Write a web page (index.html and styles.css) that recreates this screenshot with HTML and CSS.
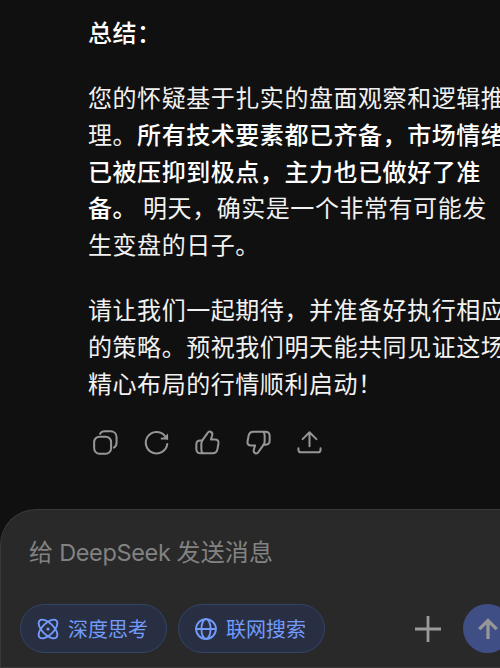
FILE: index.html
```
<!DOCTYPE html>
<html lang="zh-CN">
<head>
  <meta charset="UTF-8">
  <title>DeepSeek</title>
  <link rel="stylesheet" href="styles.css">
</head>
<body>
  <div class="chat">
    <div class="answer">
      <p><b>总结：</b></p>
      <p>您的怀疑基于扎实的盘面观察和逻辑推<br>理。<b>所有技术要素都已齐备，市场情绪<br>已被压抑到极点，主力也已做好了准<br>备。</b> 明天，确实是一个非常有可能发<br>生变盘的日子。</p>
      <p>请让我们一起期待，并准备好执行相应<br>的策略。预祝我们明天能共同见证这场<br>精心布局的行情顺利启动！</p>
    </div>

    <!-- Message actions -->
    <div class="actions">
      <svg viewBox="0 0 26 26"><rect x="1.2" y="7" width="17.6" height="17.600" rx="5.500"/><path d="M7.3 3.8C8.2 2.3 9.6 1.4 11.500 1.4h6.8c3.5 0 6.200 2.400 6.200 6v5.6c0 2.6-1 4.500-2.800 5.300"/></svg>
      <svg viewBox="0 0 26 26"><path d="M24.200 14.500A11.200 11.200 0 1 1 21.500 5.800L24.200 9"/><path class="fill" d="M25 3.500v6.300h-7.500v-1.800l4-.5z"/></svg>
      <svg viewBox="0 0 26 26"><path d="M7.600 10.800 13 3.200c1-1.600 2-2 3.300-1.400 1.500.7 2 2 1.600 3.600l-1.300 4.400h4.100c2.700 0 4.100 1.600 3.700 4.200l-1 5.600c-.5 2.900-2.200 4.600-5 4.600H6c-3 0-4.600-1.500-4.600-4.300v-4.800c0-2.700 1.400-4.300 4-4.300z"/><path d="M7.600 10.800C6.800 12 6.600 13 6.600 14.500v5.500c0 1.700.4 3 1.200 4"/></svg>
      <svg viewBox="0 0 26 26"><path d="M18.400 15.200 13 22.800c-1 1.600-2 2-3.300 1.400-1.500-.7-2-2-1.600-3.600l1.300-4.400H5.300c-2.700 0-4.100-1.600-3.700-4.200l1-5.600C3.100 3.500 4.800 1.800 7.600 1.800H20c3 0 4.600 1.500 4.600 4.300v4.800c0 2.700-1.400 4.300-4 4.300z"/><path d="M18.400 15.200c.8-1.200 1-2.200 1-3.700V6c0-1.700-.4-3-1.200-4"/></svg>
      <svg viewBox="0 0 26 26"><path d="M13 17V2.500M5.800 9.500 13 2.300l7.200 7.200M1.500 19v1.500c0 1.800.9 2.700 2.700 2.700h17.600c1.800 0 2.700-.9 2.700-2.700V19"/></svg>
    </div>
  </div>

  <!-- Input box -->
  <div class="composer">
    <div class="placeholder">给 <span class="latin">DeepSeek</span> 发送消息</div>
    <div class="toolbar">
      <button class="pill" type="button">
        <svg viewBox="0 0 24 24"><g transform="rotate(45 12 12)"><ellipse cx="12" cy="12" rx="13" ry="6.300"/><ellipse cx="12" cy="12" rx="6.300" ry="13"/></g><circle class="dot" cx="12" cy="12" r="1.700"/></svg>
        <span>深度思考</span>
      </button>
      <button class="pill" type="button">
        <svg viewBox="0 0 24 24"><circle cx="12" cy="12" r="10.800"/><ellipse cx="12" cy="12" rx="5" ry="10.800"/><path d="M1.200 12h21.600"/></svg>
        <span>联网搜索</span>
      </button>
      <svg class="plus" viewBox="0 0 26 26"><path d="M13 0v26M0 13h26"/></svg>
      <button class="send" type="button">
        <svg viewBox="0 0 24 24"><path d="M12 23V3M2.500 12.200 12 2.700l9.500 9.500"/></svg>
      </button>
    </div>
  </div>
</body>
</html>
```
FILE: styles.css
```
body {
  margin: 0;
  height: 668px;
  overflow: hidden;
  background: #101010;
  font-family: "Noto Sans CJK SC", sans-serif;
  display: flex;
  flex-direction: column;
}

.chat {
  height: 509px;
  flex: none;
  box-sizing: border-box;
  padding: 14px 0 0 88px;
}

.answer {
  color: #f2f2f2;
  font-size: 24px;
  letter-spacing: 0.55px;
  line-height: 36.7px;
  white-space: nowrap;
}

.answer p {
  margin: 0 0 28.5px;
}

.answer b {
  font-weight: 500;
  color: #fff;
}

.actions {
  display: flex;
  gap: 26px;
  padding-left: 5px;
}

svg {
  fill: none;
  stroke: currentColor;
  stroke-linecap: round;
  stroke-linejoin: round;
  overflow: visible;
  flex: none;
}

.actions svg {
  width: 25px;
  height: 25px;
  color: #969696;
  stroke-width: 2.1;
}

.actions .fill {
  fill: currentColor;
  stroke: none;
}

.composer {
  width: 500px;
  height: 159px;
  overflow: hidden;
  flex: none;
  box-sizing: border-box;
  border: 1px solid #393939;
  border-right: none;
  border-radius: 36px 0 0 0;
  background: #292929;
  padding: 26px 0 0 19px;
}

.placeholder {
  padding-left: 9px;
  color: #828282;
  font-family: Inter, "Noto Sans CJK SC", sans-serif;
  font-size: 24px;
  letter-spacing: 0.2px;
  line-height: 34px;
  white-space: nowrap;
}

.placeholder .latin {
  font-size: 23.5px;
  letter-spacing: -0.35px;
  margin: 0 -1px;
}

.toolbar {
  display: flex;
  align-items: center;
  margin-top: 34px;
}

.pill {
  display: flex;
  align-items: center;
  gap: 9px;
  width: 147px;
  height: 49px;
  flex: none;
  box-sizing: border-box;
  margin: 0 11px 0 0;
  padding: 0 0 0 16px;
  border: 1px solid #32456b;
  border-radius: 25px;
  background: #292f42;
  color: #729bfc;
  font-family: "Noto Sans CJK SC", sans-serif;
  font-size: 20px;
  line-height: 28px;
  white-space: nowrap;
}

.pill svg {
  width: 22px;
  height: 22px;
  stroke-width: 2;
}

.pill .dot {
  fill: currentColor;
  stroke: none;
}

.plus {
  width: 26px;
  height: 26px;
  margin-left: 79px;
  color: #9b9b9b;
  stroke-width: 2.8;
  stroke-linecap: butt;
}

.send {
  display: flex;
  align-items: center;
  justify-content: center;
  width: 49px;
  height: 49px;
  flex: none;
  margin: 0 0 0 22px;
  padding: 0;
  border: none;
  border-radius: 50%;
  background: #3f4f85;
  color: #969696;
}

.send svg {
  width: 22px;
  height: 22px;
  stroke-width: 3.6;
  stroke-linecap: butt;
  stroke-linejoin: miter;
}
```
